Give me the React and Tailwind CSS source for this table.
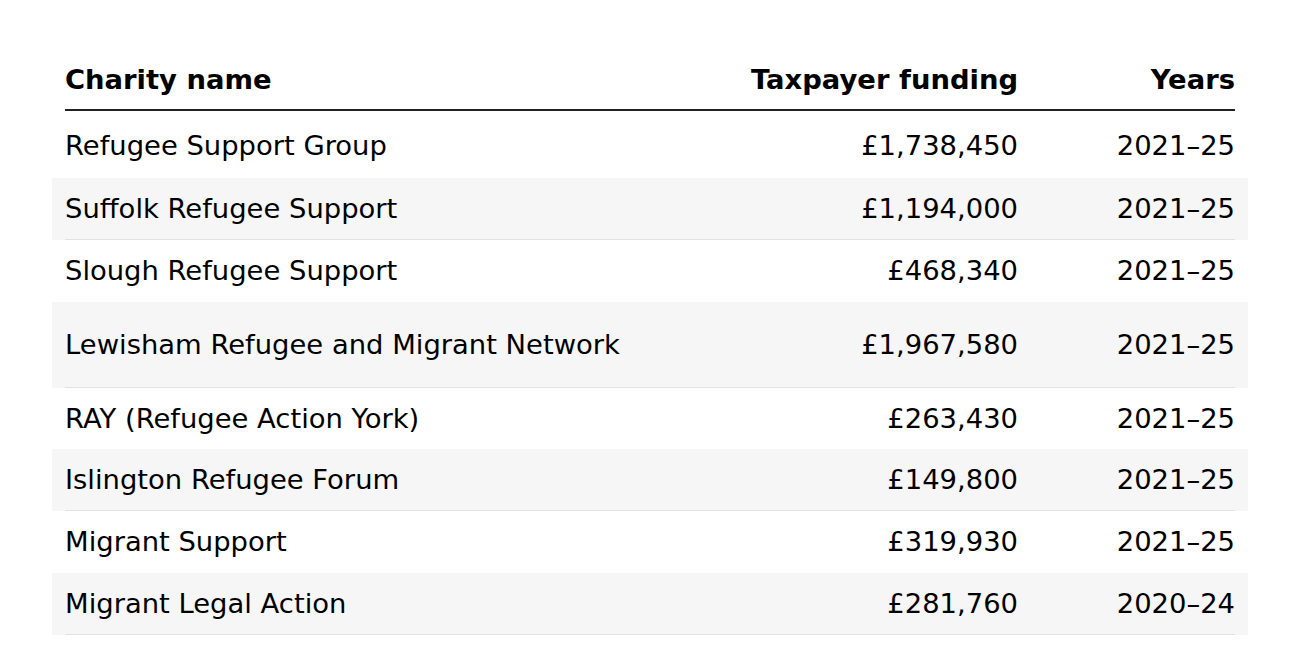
const rows = [
  { name: "Refugee Support Group", amount: "£1,738,450", years: "2021–25", h: "h-[67px] pt-[3px]" },
  { name: "Suffolk Refugee Support", amount: "£1,194,000", years: "2021–25", h: "h-[62px]" },
  { name: "Slough Refugee Support", amount: "£468,340", years: "2021–25", h: "h-[62px]" },
  { name: "Lewisham Refugee and Migrant Network", amount: "£1,967,580", years: "2021–25", h: "h-[86px]" },
  { name: "RAY (Refugee Action York)", amount: "£263,430", years: "2021–25", h: "h-[61px]" },
  { name: "Islington Refugee Forum", amount: "£149,800", years: "2021–25", h: "h-[62px]" },
  { name: "Migrant Support", amount: "£319,930", years: "2021–25", h: "h-[62px]" },
  { name: "Migrant Legal Action", amount: "£281,760", years: "2020–24", h: "h-[62px]" },
];

function App() {
  return (
    <div className="min-h-screen w-full bg-white px-[52px] pt-[50px] font-['DejaVu_Sans',sans-serif] text-black">
      <div className="mx-[13px] flex h-[61px] items-center border-b-2 border-[#222] text-[27.4px] font-bold">
        <div className="flex-1">Charity name</div>
        <div className="text-right">Taxpayer funding</div>
        <div className="w-[217px] text-right">Years</div>
      </div>
      {rows.map((r, i) => {
        const shaded = i % 2 === 1;
        return (
          <div key={r.name} className={`px-[13px] ${shaded ? "bg-[#f6f6f6]" : "bg-white"}`}>
            <div
              className={`flex items-center text-[27.4px] ${r.h} ${shaded ? "border-b border-[#e2e2e2]" : ""}`}
            >
              <div className="flex-1">{r.name}</div>
              <div className="text-right">{r.amount}</div>
              <div className="w-[217px] text-right">{r.years}</div>
            </div>
          </div>
        );
      })}
    </div>
  );
}

export default App;
